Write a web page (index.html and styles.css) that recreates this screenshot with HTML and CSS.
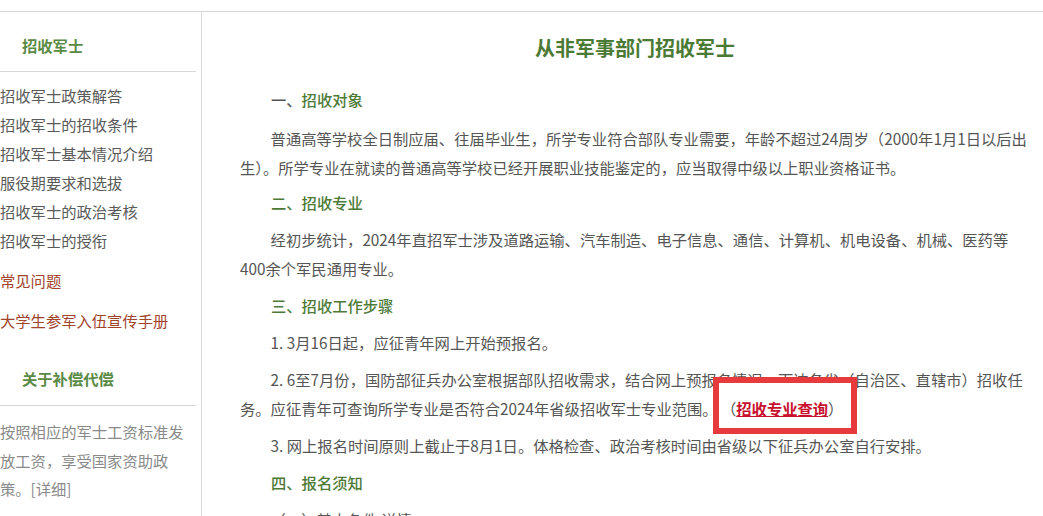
FILE: index.html
```html
<!DOCTYPE html>
<html lang="zh-CN">
<head>
<meta charset="utf-8">
<title>从非军事部门招收军士</title>
<link rel="stylesheet" href="styles.css">
</head>
<body>
<div class="topbar"></div>
<div class="page">
  <aside class="sidebar">
    <h3 class="side-title">招收军士</h3>
    <ul class="side-list">
      <li>招收军士政策解答</li>
      <li>招收军士的招收条件</li>
      <li>招收军士基本情况介绍</li>
      <li>服役期要求和选拔</li>
      <li>招收军士的政治考核</li>
      <li>招收军士的授衔</li>
      <li class="red first-red">常见问题</li>
      <li class="red">大学生参军入伍宣传手册</li>
    </ul>
    <h3 class="side-title side-title-2">关于补偿代偿</h3>
    <p class="side-desc">按照相应的军士工资标准发放工资，享受国家资助政策。[详细]</p>
  </aside>
  <main class="main">
    <h1 class="title">从非军事部门招收军士</h1>
    <h4 class="sec sec-first"><span class="num">一、</span>招收对象</h4>
    <p class="para para-first">普通高等学校全日制应届、往届毕业生，所学专业符合部队专业需要，年龄不超过24周岁（2000年1月1日以后出生）。所学专业在就读的普通高等学校已经开展职业技能鉴定的，应当取得中级以上职业资格证书。</p>
    <h4 class="sec">二、招收专业</h4>
    <p class="para">经初步统计，2024年直招军士涉及道路运输、汽车制造、电子信息、通信、计算机、机电设备、机械、医药等400余个军民通用专业。</p>
    <h4 class="sec">三、招收工作步骤</h4>
    <p class="para">1. 3月16日起，应征青年网上开始预报名。</p>
    <p class="para">2. 6至7月份，国防部征兵办公室根据部队招收需求，结合网上预报名情况，下达各省（自治区、直辖市）招收任务。应征青年可查询所学专业是否符合2024年省级招收军士专业范围。 <span class="mark">（<a class="link" href="#">招收专业查询</a>）</span></p>
    <p class="para">3. 网上报名时间原则上截止于8月1日。体格检查、政治考核时间由省级以下征兵办公室自行安排。</p>
    <h4 class="sec">四、报名须知</h4>
    <p class="para">（一）基本条件 详情</p>
  </main>
</div>
</body>
</html>
```
FILE: styles.css
```css
html, body {
  margin: 0;
  padding: 0;
  overflow: hidden;
  background: #fff;
}
body {
  font-family: "Noto Sans CJK SC", "Noto Sans", sans-serif;
  font-size: 15.3px;
  color: #555;
}
.topbar {
  height: 11px;
  border-bottom: 1px solid #d4d4d4;
  width: 1100px;
}
.page {
  display: flex;
  width: 1100px;
  align-items: stretch;
  min-height: 600px;
}
.sidebar {
  width: 196px;
  padding-right: 5px;
  border-right: 1px solid #dcdcdc;
  flex: none;
}
.side-title {
  margin: 0;
  padding: 18px 0 11px 22px;
  line-height: 30px;
  font-size: 15.3px;
  font-weight: bold;
  color: #5b8a45;
  border-bottom: 1px solid #d8d8d8;
}
.side-title-2 {
  padding-top: 28px;
  padding-bottom: 12px;
}
.side-list {
  list-style: none;
  margin: 0;
  padding: 9px 0 0 0;
}
.side-list li {
  line-height: 29px;
  color: #5a5a5a;
  white-space: nowrap;
}
.side-list li.red {
  color: #a2432c;
  margin-top: 11px;
}
.side-desc {
  margin: 0;
  padding-top: 11px;
  width: 188px;
  line-height: 28.5px;
  color: #8a8a8a;
}
.main {
  padding: 21px 0 0 38px;
  width: 790px;
  flex: none;
}
.title {
  margin: 0 0 22px 0;
  text-align: center;
  font-size: 20px;
  line-height: 30px;
  font-weight: bold;
  color: #4b7a35;
}
.sec {
  margin: 0 0 8px 0;
  padding-left: 31px;
  font-size: 15.3px;
  line-height: 29px;
  font-weight: 500;
  color: #4e7a38;
}
.sec-first {
  margin-bottom: 10px;
}
.sec .num {
  color: #555;
}
.para {
  margin: 0 0 8px 0;
  text-indent: 2em;
  line-height: 29px;
}
.para-first {
  margin-bottom: 6px;
}
.mark {
  position: relative;
  z-index: 1;
}
.mark::before {
  content: "";
  position: absolute;
  left: -8px;
  top: -20px;
  width: 144px;
  height: 57px;
  box-sizing: border-box;
  border: 6px solid #e63a3c;
  background: #fff;
  z-index: -1;
}
.link {
  color: #c8102e;
  font-weight: bold;
  text-decoration: underline;
}
```
